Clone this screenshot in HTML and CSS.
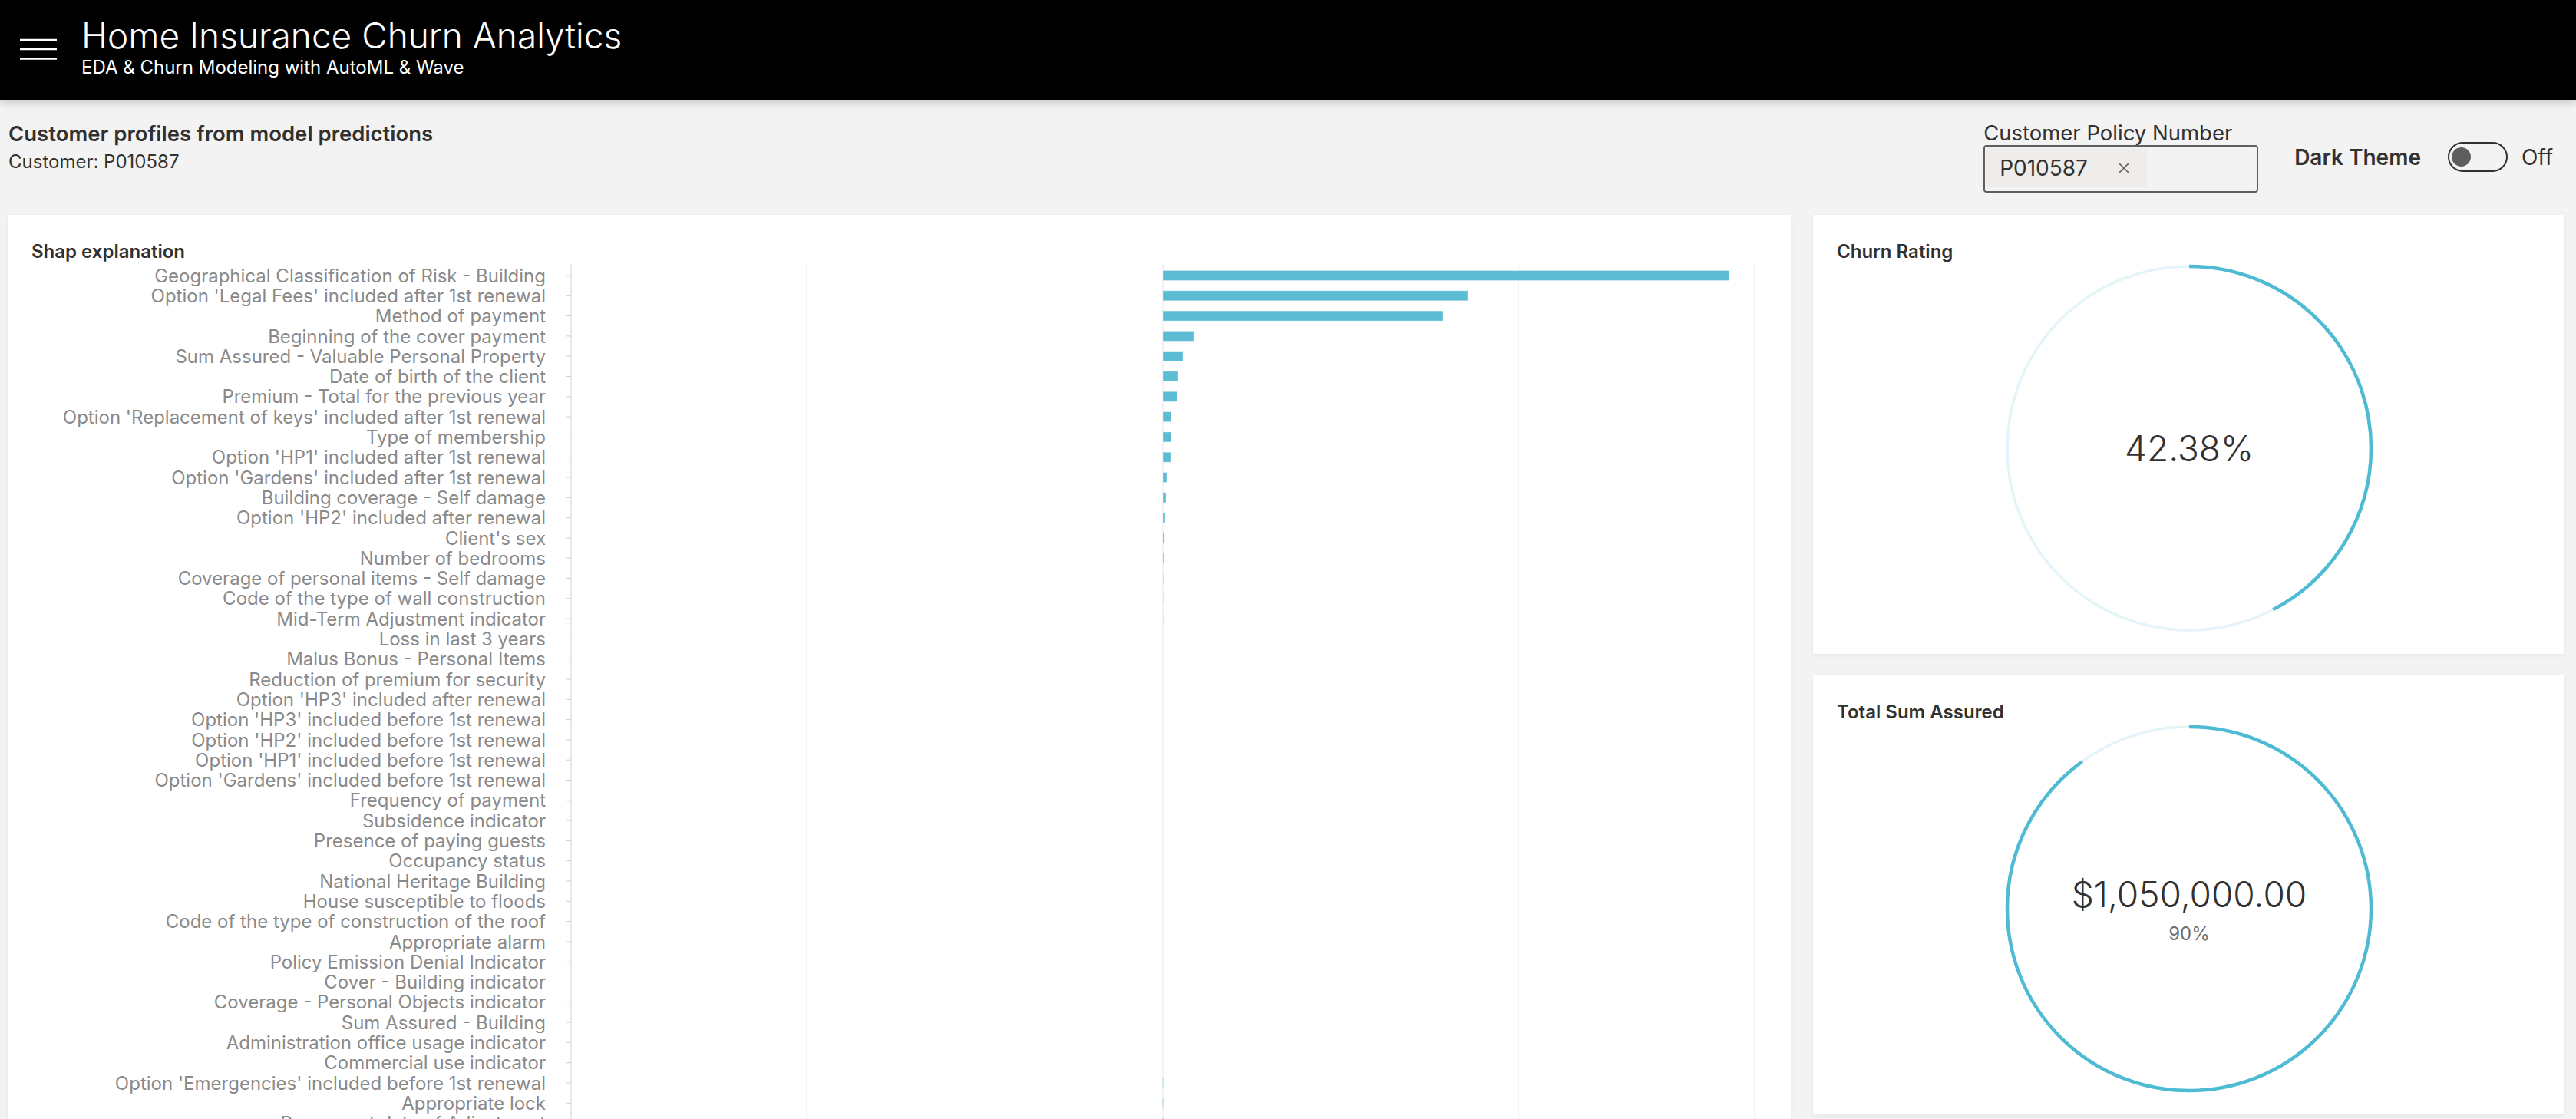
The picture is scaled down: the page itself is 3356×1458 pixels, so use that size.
FILE: index.html
```html
<!DOCTYPE html>
<html lang="en">
<head>
<meta charset="utf-8">
<title>Home Insurance Churn Analytics</title>
<link rel="stylesheet" href="styles.css">
</head>
<body>
<header class="topbar">
  <button class="nav-toggle" aria-label="Menu">
    <svg width="48" height="30" viewBox="0 0 48 30"><path d="M0 2H48M0 14H48M0 26.5H48" stroke="#fff" stroke-width="2.6" fill="none"/></svg>
  </button>
  <div class="brand">
    <div class="brand-title">Home Insurance Churn Analytics</div>
    <div class="brand-sub">EDA &amp; Churn Modeling with AutoML &amp; Wave</div>
  </div>
</header>

<main class="page">
  <section class="toolbar">
    <div class="intro">
      <h1>Customer profiles from model predictions</h1>
      <p>Customer: P010587</p>
    </div>
    <div class="controls">
      <div class="field">
        <label class="field-label">Customer Policy Number</label>
        <div class="picker">
          <span class="tag"><span class="tag-text">P010587</span>
            <svg class="tag-remove" width="18" height="18" viewBox="0 0 18 18"><path d="M2 2L16 16M16 2L2 16" stroke="#605e5c" stroke-width="1.6" fill="none"/></svg>
          </span>
        </div>
      </div>
      <div class="switch-group">
        <span class="switch-label">Dark Theme</span>
        <span class="switch"><span class="thumb"></span></span>
        <span class="switch-state">Off</span>
      </div>
    </div>
  </section>

  <section class="board">
    <article class="card shap">
      <div class="card-title">Shap explanation</div>
      <svg class="chart" width="2262" height="1180" viewBox="0 0 2262 1180">
        <g class="grid">
          <line x1="1010" y1="0" x2="1010" y2="1180"/>
          <line x1="1474" y1="0" x2="1474" y2="1180"/>
          <line x1="1937" y1="0" x2="1937" y2="1180"/>
          <line x1="2245" y1="0" x2="2245" y2="1180"/>
        </g>
        <line class="axis" x1="703" y1="0" x2="703" y2="1180"/>
        <g class="row" transform="translate(0,15)"><text x="670" dy="0.36em">Geographical Classification of Risk - Building</text><line x1="696" x2="703"/><rect x="1474" y="-6.5" width="738" height="13"/></g>
        <g class="row" transform="translate(0,41.3)"><text x="670" dy="0.36em">Option 'Legal Fees' included after 1st renewal</text><line x1="696" x2="703"/><rect x="1474" y="-6.5" width="397" height="13"/></g>
        <g class="row" transform="translate(0,67.6)"><text x="670" dy="0.36em">Method of payment</text><line x1="696" x2="703"/><rect x="1474" y="-6.5" width="365" height="13"/></g>
        <g class="row" transform="translate(0,93.9)"><text x="670" dy="0.36em">Beginning of the cover payment</text><line x1="696" x2="703"/><rect x="1474" y="-6.5" width="40" height="13"/></g>
        <g class="row" transform="translate(0,120.2)"><text x="670" dy="0.36em">Sum Assured - Valuable Personal Property</text><line x1="696" x2="703"/><rect x="1474" y="-6.5" width="26" height="13"/></g>
        <g class="row" transform="translate(0,146.5)"><text x="670" dy="0.36em">Date of birth of the client</text><line x1="696" x2="703"/><rect x="1474" y="-6.5" width="20" height="13"/></g>
        <g class="row" transform="translate(0,172.8)"><text x="670" dy="0.36em">Premium - Total for the previous year</text><line x1="696" x2="703"/><rect x="1474" y="-6.5" width="19" height="13"/></g>
        <g class="row" transform="translate(0,199.1)"><text x="670" dy="0.36em">Option 'Replacement of keys' included after 1st renewal</text><line x1="696" x2="703"/><rect x="1474" y="-6.5" width="11" height="13"/></g>
        <g class="row" transform="translate(0,225.4)"><text x="670" dy="0.36em">Type of membership</text><line x1="696" x2="703"/><rect x="1474" y="-6.5" width="11" height="13"/></g>
        <g class="row" transform="translate(0,251.7)"><text x="670" dy="0.36em">Option 'HP1' included after 1st renewal</text><line x1="696" x2="703"/><rect x="1474" y="-6.5" width="10" height="13"/></g>
        <g class="row" transform="translate(0,278)"><text x="670" dy="0.36em">Option 'Gardens' included after 1st renewal</text><line x1="696" x2="703"/><rect x="1474" y="-6.5" width="5" height="13"/></g>
        <g class="row" transform="translate(0,304.3)"><text x="670" dy="0.36em">Building coverage - Self damage</text><line x1="696" x2="703"/><rect x="1474" y="-6.5" width="4" height="13"/></g>
        <g class="row" transform="translate(0,330.6)"><text x="670" dy="0.36em">Option 'HP2' included after renewal</text><line x1="696" x2="703"/><rect x="1474" y="-6.5" width="3" height="13"/></g>
        <g class="row" transform="translate(0,356.9)"><text x="670" dy="0.36em">Client's sex</text><line x1="696" x2="703"/><rect x="1474" y="-6.5" width="2" height="13"/></g>
        <g class="row" transform="translate(0,383.2)"><text x="670" dy="0.36em">Number of bedrooms</text><line x1="696" x2="703"/><rect x="1474" y="-6.5" width="1" height="13"/></g>
        <g class="row" transform="translate(0,409.5)"><text x="670" dy="0.36em">Coverage of personal items - Self damage</text><line x1="696" x2="703"/><rect x="1474" y="-6.5" width="0.5" height="13"/></g>
        <g class="row" transform="translate(0,435.8)"><text x="670" dy="0.36em">Code of the type of wall construction</text><line x1="696" x2="703"/><rect x="1474" y="-6.5" width="0.4" height="13"/></g>
        <g class="row" transform="translate(0,462.1)"><text x="670" dy="0.36em">Mid-Term Adjustment indicator</text><line x1="696" x2="703"/><rect x="1474" y="-6.5" width="0.3" height="13"/></g>
        <g class="row" transform="translate(0,488.4)"><text x="670" dy="0.36em">Loss in last 3 years</text><line x1="696" x2="703"/></g>
        <g class="row" transform="translate(0,514.7)"><text x="670" dy="0.36em">Malus Bonus - Personal Items</text><line x1="696" x2="703"/></g>
        <g class="row" transform="translate(0,541)"><text x="670" dy="0.36em">Reduction of premium for security</text><line x1="696" x2="703"/></g>
        <g class="row" transform="translate(0,567.3)"><text x="670" dy="0.36em">Option 'HP3' included after renewal</text><line x1="696" x2="703"/></g>
        <g class="row" transform="translate(0,593.6)"><text x="670" dy="0.36em">Option 'HP3' included before 1st renewal</text><line x1="696" x2="703"/></g>
        <g class="row" transform="translate(0,619.9)"><text x="670" dy="0.36em">Option 'HP2' included before 1st renewal</text><line x1="696" x2="703"/></g>
        <g class="row" transform="translate(0,646.2)"><text x="670" dy="0.36em">Option 'HP1' included before 1st renewal</text><line x1="696" x2="703"/></g>
        <g class="row" transform="translate(0,672.5)"><text x="670" dy="0.36em">Option 'Gardens' included before 1st renewal</text><line x1="696" x2="703"/></g>
        <g class="row" transform="translate(0,698.8)"><text x="670" dy="0.36em">Frequency of payment</text><line x1="696" x2="703"/></g>
        <g class="row" transform="translate(0,725.1)"><text x="670" dy="0.36em">Subsidence indicator</text><line x1="696" x2="703"/></g>
        <g class="row" transform="translate(0,751.4)"><text x="670" dy="0.36em">Presence of paying guests</text><line x1="696" x2="703"/></g>
        <g class="row" transform="translate(0,777.7)"><text x="670" dy="0.36em">Occupancy status</text><line x1="696" x2="703"/></g>
        <g class="row" transform="translate(0,804)"><text x="670" dy="0.36em">National Heritage Building</text><line x1="696" x2="703"/></g>
        <g class="row" transform="translate(0,830.3)"><text x="670" dy="0.36em">House susceptible to floods</text><line x1="696" x2="703"/></g>
        <g class="row" transform="translate(0,856.6)"><text x="670" dy="0.36em">Code of the type of construction of the roof</text><line x1="696" x2="703"/></g>
        <g class="row" transform="translate(0,882.9)"><text x="670" dy="0.36em">Appropriate alarm</text><line x1="696" x2="703"/></g>
        <g class="row" transform="translate(0,909.2)"><text x="670" dy="0.36em">Policy Emission Denial Indicator</text><line x1="696" x2="703"/></g>
        <g class="row" transform="translate(0,935.5)"><text x="670" dy="0.36em">Cover - Building indicator</text><line x1="696" x2="703"/></g>
        <g class="row" transform="translate(0,961.8)"><text x="670" dy="0.36em">Coverage - Personal Objects indicator</text><line x1="696" x2="703"/></g>
        <g class="row" transform="translate(0,988.1)"><text x="670" dy="0.36em">Sum Assured - Building</text><line x1="696" x2="703"/></g>
        <g class="row" transform="translate(0,1014.4)"><text x="670" dy="0.36em">Administration office usage indicator</text><line x1="696" x2="703"/></g>
        <g class="row" transform="translate(0,1040.7)"><text x="670" dy="0.36em">Commercial use indicator</text><line x1="696" x2="703"/></g>
        <g class="row" transform="translate(0,1067)"><text x="670" dy="0.36em">Option 'Emergencies' included before 1st renewal</text><line x1="696" x2="703"/><rect class="faint" x="1473.5" y="-6.5" width="1" height="13"/></g>
        <g class="row" transform="translate(0,1093.3)"><text x="670" dy="0.36em">Appropriate lock</text><line x1="696" x2="703"/><rect class="faint" x="1473.5" y="-6.5" width="1" height="13"/></g>
        <g class="row" transform="translate(0,1119.6)"><text x="670" dy="0.36em">Permanent date of Adjustment</text><line x1="696" x2="703"/><rect x="1473" y="-6.5" width="2" height="13"/></g>
      </svg>
    </article>

    <div class="side">
      <article class="card gauge">
        <div class="card-title">Churn Rating</div>
        <div class="ring">
          <svg width="480" height="480" viewBox="0 0 480 480">
            <circle class="ring-track" cx="240" cy="240" r="237"/>
            <circle class="ring-arc" cx="240" cy="240" r="237" pathLength="100" stroke-dasharray="42.38 100" transform="rotate(-90 240 240)"/>
          </svg>
          <div class="ring-text">
            <div class="ring-value">42.38%</div>
          </div>
        </div>
      </article>
      <article class="card gauge">
        <div class="card-title">Total Sum Assured</div>
        <div class="ring">
          <svg width="480" height="480" viewBox="0 0 480 480">
            <circle class="ring-track" cx="240" cy="240" r="237"/>
            <circle class="ring-arc" cx="240" cy="240" r="237" pathLength="100" stroke-dasharray="90 100" transform="rotate(-90 240 240)"/>
          </svg>
          <div class="ring-text">
            <div class="ring-value">$1,050,000.00</div>
            <div class="ring-sub">90%</div>
          </div>
        </div>
      </article>
    </div>
  </section>
</main>
</body>
</html>
```
FILE: styles.css
```css
html, body {
  margin: 0;
  height: 100%;
  overflow: hidden;
}

body {
  background: #f3f3f3;
  font-family: Inter, "Noto Sans", sans-serif;
  color: #323130;
}

/* Header */
.topbar {
  position: relative;
  z-index: 1;
  height: 130px;
  box-sizing: border-box;
  background: #000;
  color: #fff;
  display: flex;
  align-items: flex-start;
  padding-left: 26px;
  box-shadow: 0 4px 10px rgba(0, 0, 0, 0.18);
}

.nav-toggle {
  align-self: center;
  width: 48px;
  height: 30px;
  padding: 0;
  margin: 0 32px 0 0;
  border: 0;
  background: none;
  display: block;
}

.nav-toggle svg {
  display: block;
}

.brand {
  padding-top: 18px;
}

.brand-title {
  font-size: 46px;
  font-weight: 300;
  line-height: 56px;
  white-space: nowrap;
}

.brand-sub {
  font-size: 24px;
  font-weight: 400;
  line-height: 30px;
  margin-top: -1px;
  white-space: nowrap;
}

/* Toolbar */
.toolbar {
  display: flex;
  justify-content: space-between;
  align-items: flex-start;
  height: 150px;
  box-sizing: border-box;
  padding: 27px 30px 0 11px;
}

.intro h1 {
  margin: 0;
  font-size: 27.5px;
  font-weight: 600;
  line-height: 34px;
  color: #323130;
}

.intro p {
  margin: 4px 0 0;
  font-size: 24px;
  line-height: 32px;
  color: #323130;
}

.controls {
  display: flex;
  align-items: center;
  padding-top: 1px;
}

.field-label {
  display: block;
  font-size: 27.5px;
  line-height: 31px;
  color: #323130;
  white-space: nowrap;
}

.picker {
  width: 358px;
  height: 62px;
  box-sizing: border-box;
  border: 2px solid #605e5c;
  border-radius: 4px;
  padding: 2px;
  display: flex;
}

.tag {
  width: 209px;
  height: 51px;
  box-sizing: border-box;
  background: #eeedec;
  border-radius: 2px;
  display: flex;
  align-items: center;
  padding-left: 17px;
}

.tag-text {
  font-size: 28px;
  color: #323130;
}

.tag-remove {
  margin-left: 38px;
  display: block;
}

.switch-group {
  display: flex;
  align-items: center;
  margin-left: 47px;
}

.switch-label {
  font-size: 28px;
  font-weight: 600;
  color: #323130;
}

.switch {
  width: 78px;
  height: 39px;
  box-sizing: border-box;
  border: 2px solid #323130;
  border-radius: 20px;
  margin-left: 35px;
  display: flex;
  align-items: center;
  padding-left: 3px;
}

.thumb {
  width: 25px;
  height: 25px;
  border-radius: 50%;
  background: #605e5c;
}

.switch-state {
  margin-left: 18px;
  font-size: 28px;
  color: #323130;
}

/* Board */
.board {
  display: flex;
  align-items: flex-start;
  gap: 29px;
  padding: 0 15px 0 10px;
}

.card {
  background: #fff;
  box-sizing: border-box;
  padding: 32px 30px 0 31px;
  box-shadow: 0 2px 6px rgba(0, 0, 0, 0.06);
}

.card-title {
  font-size: 24px;
  font-weight: 600;
  line-height: 32px;
  color: #323130;
}

.shap {
  flex: 1;
  min-width: 0;
}

.chart {
  display: block;
  font-family: Inter, "Noto Sans", sans-serif;
}

.chart .grid line {
  stroke: #e6e6e6;
  stroke-width: 1;
}

.chart .axis {
  stroke: #cfcfcf;
  stroke-width: 1;
}

.chart .row text {
  font-size: 24px;
  fill: #8a8a8a;
  text-anchor: end;
}

.chart .row line {
  stroke: #cfcfcf;
  stroke-width: 1;
}

.chart .row rect {
  fill: #5bbcd3;
  stroke: rgba(255, 255, 255, 0.35);
  stroke-width: 1;
}

.chart .row rect.faint {
  fill: #a9dce8;
  stroke: none;
}

.side {
  width: 979px;
  flex: none;
  display: flex;
  flex-direction: column;
  gap: 28px;
}

.gauge {
  height: 572px;
  display: flex;
  flex-direction: column;
}

.ring {
  align-self: center;
  display: grid;
  width: 480px;
  height: 480px;
}

.ring > * {
  grid-area: 1 / 1;
}

.ring svg {
  display: block;
}

.ring-track {
  fill: none;
  stroke: #e4f4f8;
  stroke-width: 3.5;
}

.ring-arc {
  fill: none;
  stroke: #4fbbd3;
  stroke-width: 4.5;
}

.ring-text {
  display: flex;
  flex-direction: column;
  align-items: center;
  justify-content: center;
}

.ring-value {
  font-size: 46px;
  font-weight: 300;
  line-height: 58px;
  color: #323130;
}

.ring-sub {
  font-size: 24px;
  line-height: 30px;
  margin-top: 8px;
  color: #6f6e6d;
}
```
